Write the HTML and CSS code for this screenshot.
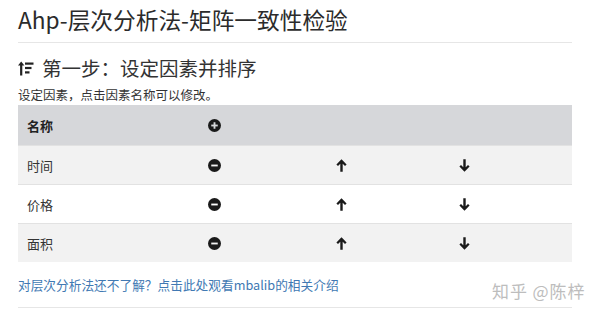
FILE: index.html
```html
<!DOCTYPE html>
<html>
<head>
<meta charset="utf-8">
<link rel="stylesheet" href="styles.css">
</head>
<body>
<div class="page">
  <h1 class="title">Ahp-层次分析法-矩阵一致性检验</h1>
  <hr class="rule">
  <h2 class="step">
    <svg class="sort-ico" width="16" height="15" viewBox="0 0 16 15">
      <path d="M3.2 0.5 L0 4.6 H2.1 V14.5 H4.3 V4.6 H6.4 Z" fill="#222"/>
      <rect x="7" y="1.5" width="8.5" height="2.2" fill="#222"/>
      <rect x="7" y="5.9" width="6.5" height="2.2" fill="#222"/>
      <rect x="7" y="10.3" width="4.5" height="2.2" fill="#222"/>
    </svg>
    <span>第一步：设定因素并排序</span>
  </h2>
  <p class="hint">设定因素，点击因素名称可以修改。</p>
  <div class="table">
    <div class="row head">
      <div class="c name">名称</div>
      <div class="c op">
        <svg width="13" height="13" viewBox="0 0 14 14"><circle cx="7" cy="7" r="7" fill="#1a1a1a"/><rect x="3.5" y="6" width="7" height="2" fill="#d6d7da"/><rect x="6" y="3.5" width="2" height="7" fill="#d6d7da"/></svg>
      </div>
      <div class="c up"></div>
      <div class="c down"></div>
    </div>
    <div class="row alt">
      <div class="c name">时间</div>
      <div class="c op"><svg width="13" height="13" viewBox="0 0 14 14"><circle cx="7" cy="7" r="7" fill="#1a1a1a"/><rect x="3.5" y="6" width="7" height="2" fill="#f2f2f2"/></svg></div>
      <div class="c up"><svg width="11" height="13" viewBox="0 0 11 13"><path d="M5.5 0.3 L0.4 5.4 L2 7 L4.3 4.7 V12.7 H6.7 V4.7 L9 7 L10.6 5.4 Z" fill="#1a1a1a"/></svg></div>
      <div class="c down"><svg width="11" height="13" viewBox="0 0 11 13"><path d="M5.5 12.7 L0.4 7.6 L2 6 L4.3 8.3 V0.3 H6.7 V8.3 L9 6 L10.6 7.6 Z" fill="#1a1a1a"/></svg></div>
    </div>
    <div class="row">
      <div class="c name">价格</div>
      <div class="c op"><svg width="13" height="13" viewBox="0 0 14 14"><circle cx="7" cy="7" r="7" fill="#1a1a1a"/><rect x="3.5" y="6" width="7" height="2" fill="#fff"/></svg></div>
      <div class="c up"><svg width="11" height="13" viewBox="0 0 11 13"><path d="M5.5 0.3 L0.4 5.4 L2 7 L4.3 4.7 V12.7 H6.7 V4.7 L9 7 L10.6 5.4 Z" fill="#1a1a1a"/></svg></div>
      <div class="c down"><svg width="11" height="13" viewBox="0 0 11 13"><path d="M5.5 12.7 L0.4 7.6 L2 6 L4.3 8.3 V0.3 H6.7 V8.3 L9 6 L10.6 7.6 Z" fill="#1a1a1a"/></svg></div>
    </div>
    <div class="row alt">
      <div class="c name">面积</div>
      <div class="c op"><svg width="13" height="13" viewBox="0 0 14 14"><circle cx="7" cy="7" r="7" fill="#1a1a1a"/><rect x="3.5" y="6" width="7" height="2" fill="#f2f2f2"/></svg></div>
      <div class="c up"><svg width="11" height="13" viewBox="0 0 11 13"><path d="M5.5 0.3 L0.4 5.4 L2 7 L4.3 4.7 V12.7 H6.7 V4.7 L9 7 L10.6 5.4 Z" fill="#1a1a1a"/></svg></div>
      <div class="c down"><svg width="11" height="13" viewBox="0 0 11 13"><path d="M5.5 12.7 L0.4 7.6 L2 6 L4.3 8.3 V0.3 H6.7 V8.3 L9 6 L10.6 7.6 Z" fill="#1a1a1a"/></svg></div>
    </div>
  </div>
  <a class="link" href="#">对层次分析法还不了解？点击此处观看mbalib的相关介绍</a>
  <hr class="rule bottom">
  <div class="watermark">知乎 @陈梓</div>
</div>
</body>
</html>
```
FILE: styles.css
```css
html, body {
  margin: 0;
  padding: 0;
  background: #fff;
}
body {
  font-family: "Noto Sans CJK SC", "Noto Sans", sans-serif;
  color: #333;
}
.page {
  position: relative;
  width: 554px;
  height: 316px;
  margin-left: 18px;
}
.title {
  margin: 0;
  padding-top: 4px;
  font-size: 22.7px;
  font-weight: 400;
  line-height: 32px;
  color: #2b2b2b;
}
.rule {
  margin: 6px 0 0 0;
  border: 0;
  border-top: 1px solid #e6e6e6;
  height: 0;
}
.step {
  margin: 11px 0 0 0;
  display: flex;
  align-items: center;
  gap: 8px;
  font-size: 19.5px;
  font-weight: 400;
  line-height: 28px;
  color: #333;
}
.sort-ico {
  flex: none;
}
.hint {
  margin: 4px 0 0 0;
  font-size: 12.5px;
  line-height: 18px;
  color: #333;
}
.table {
  margin-top: 1px;
}
.row {
  display: flex;
  box-sizing: border-box;
  height: 39px;
  align-items: center;
  border-top: 1px solid #e2e2e2;
  font-size: 13px;
}
.row.head {
  height: 40px;
  border-top: 0;
  background: #d6d7da;
  font-weight: 700;
  color: #222;
}
.row.alt {
  background: #f2f2f2;
}
.c {
  display: flex;
  align-items: center;
}
.name {
  width: 190px;
  padding-left: 9px;
  box-sizing: border-box;
}
.op {
  width: 128px;
}
.up {
  width: 123px;
  padding-left: 1px;
}
.down {
  width: 113px;
}
.link {
  display: block;
  margin-top: 14px;
  font-size: 12.7px;
  line-height: 18px;
  color: #4179b3;
  text-decoration: none;
}
.rule.bottom {
  margin-top: 13px;
}
.watermark {
  position: absolute;
  left: 474px;
  top: 278px;
  font-size: 17px;
  color: #bdbdbd;
  letter-spacing: 0.9px;
  white-space: nowrap;
}
```
